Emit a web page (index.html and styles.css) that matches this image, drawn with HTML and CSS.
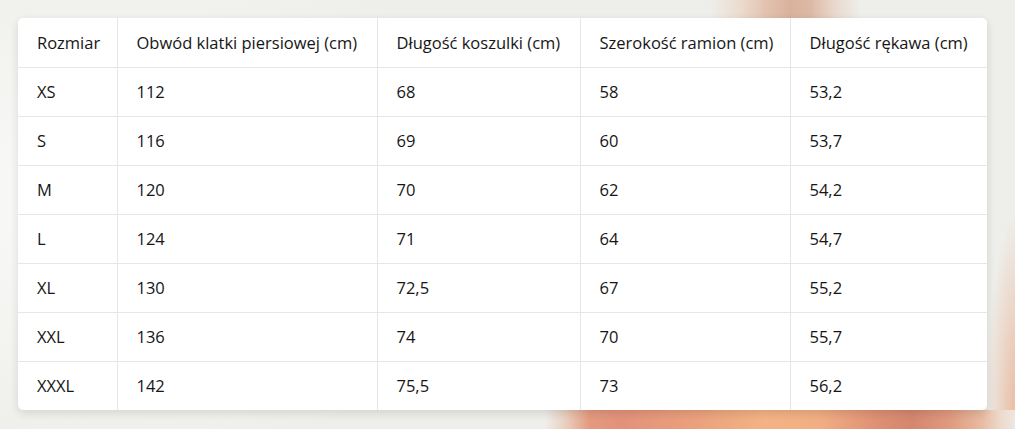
FILE: index.html
```html
<!DOCTYPE html>
<html lang="pl">
<head>
<meta charset="utf-8">
<link rel="stylesheet" href="styles.css">
</head>
<body>
<div class="card">
<table class="sizes">
<colgroup>
<col class="c1"><col class="c2"><col class="c3"><col class="c4"><col class="c5">
</colgroup>
<thead>
<tr><th>Rozmiar</th><th>Obwód klatki piersiowej (cm)</th><th>Długość koszulki (cm)</th><th>Szerokość ramion (cm)</th><th>Długość rękawa (cm)</th></tr>
</thead>
<tbody>
<tr><td>XS</td><td>112</td><td>68</td><td>58</td><td>53,2</td></tr>
<tr><td>S</td><td>116</td><td>69</td><td>60</td><td>53,7</td></tr>
<tr><td>M</td><td>120</td><td>70</td><td>62</td><td>54,2</td></tr>
<tr><td>L</td><td>124</td><td>71</td><td>64</td><td>54,7</td></tr>
<tr><td>XL</td><td>130</td><td>72,5</td><td>67</td><td>55,2</td></tr>
<tr><td>XXL</td><td>136</td><td>74</td><td>70</td><td>55,7</td></tr>
<tr><td>XXXL</td><td>142</td><td>75,5</td><td>73</td><td>56,2</td></tr>
</tbody>
</table>
</div>
</body>
</html>
```
FILE: styles.css
```css
html {
  margin: 0;
  height: 100%;
  background-color: #eeeeea;
  background-repeat: no-repeat;
  background-image:
    linear-gradient(to right, rgba(234,161,127,0) 545px, #ead0c0 565px, #e49a7e 590px, #e3927a 620px, #ea9f7d 690px, #f4b384 765px, #f1ae83 820px, #df9175 875px, #d4866e 912px, #e09a7f 950px, #e8bba2 982px, #ecd9cc 1000px, #eee7e0 1015px),
    radial-gradient(ellipse 35px 220px at 1020px 430px, #e8b497 0%, rgba(232,180,151,0) 100%),
    linear-gradient(to right, rgba(238,238,234,0) 710px, #ecdccf 740px, #e3c3b0 765px, #d9b29e 790px, #dcb8a5 810px, #e9d9cd 835px, rgba(238,238,234,0) 860px);
  background-size: 100% 19px, 100% 100%, 100% 18px;
  background-position: 0 410px, 0 0, 0 0;
}
body {
  margin: 0;
  height: 100%;
  padding: 18px 28px 19px 18px;
  box-sizing: border-box;
  font-family: "Open Sans", "Noto Sans", sans-serif;
  color: #161616;
  background-repeat: no-repeat;
  background-image: radial-gradient(ellipse 420px 260px at 120px 200px, #fbfbfa 0%, rgba(251,251,250,0) 100%);
}
.card {
  width: 969px;
  background: #ffffff;
  border-radius: 5px;
  overflow: hidden;
  box-shadow: 0 3px 10px rgba(0, 0, 0, 0.12);
}
.sizes {
  width: 969px;
  border-collapse: collapse;
  table-layout: fixed;
}
.c1 { width: 99px; }
.c2 { width: 260px; }
.c3 { width: 203px; }
.c4 { width: 210px; }
.c5 { width: 197px; }
.sizes th,
.sizes td {
  height: 48px;
  padding: 0 0 0 19px;
  text-align: left;
  font-weight: 400;
  font-size: 16.5px;
  line-height: 20px;
  white-space: nowrap;
  border-left: 1px solid #e6e6e6;
  border-top: 1px solid #e6e6e6;
}
.sizes th:first-child,
.sizes td:first-child {
  border-left: none;
}
.sizes thead th {
  border-top: none;
  height: 49px;
}
```
